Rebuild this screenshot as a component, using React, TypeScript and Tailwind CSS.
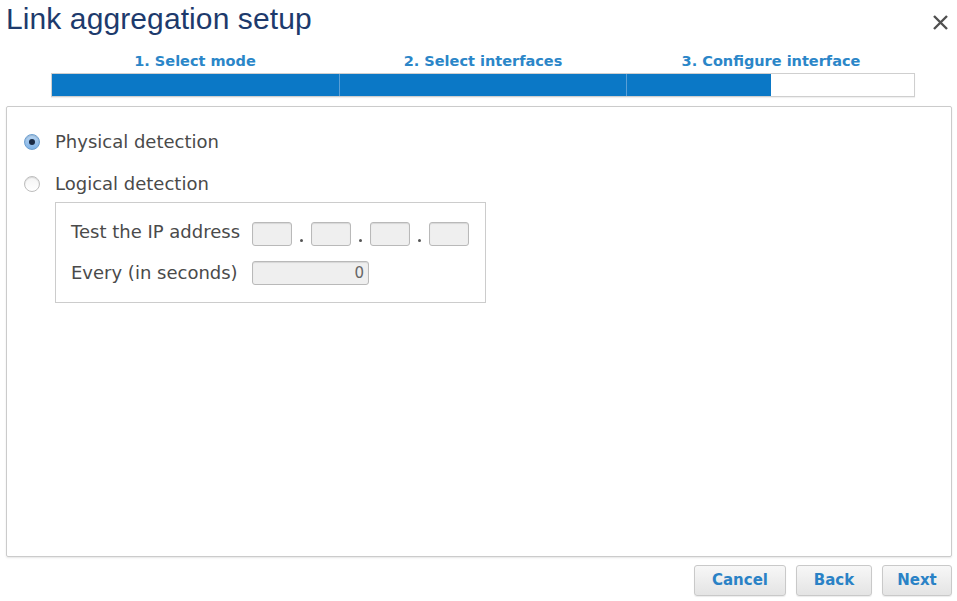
import React from "react";

const font = { fontFamily: '"Liberation Sans", Arial, Helvetica, sans-serif' };
const body = { fontFamily: '"DejaVu Sans", Verdana, sans-serif' };

function Radio({ checked }: { checked: boolean }) {
  if (checked) {
    return (
      <span className="w-[16px] h-[16px] rounded-full border border-[#6c9fd0] bg-gradient-to-b from-[#b9d6f3] to-[#7fb2e6] flex items-center justify-center shadow-[inset_0_1px_1px_rgba(0,0,0,0.15)]">
        <span className="w-[6px] h-[6px] rounded-full bg-[#1a2a44]" />
      </span>
    );
  }
  return (
    <span className="w-[16px] h-[16px] rounded-full border border-[#bdbdbd] bg-gradient-to-b from-[#f4f4f4] to-[#ffffff] shadow-[inset_0_1px_1px_rgba(0,0,0,0.12)]" />
  );
}

function Field({ w, value }: { w: string; value?: string }) {
  return (
    <div
      className={`${w} h-[24px] rounded-[3px] border border-[#b9b9b9] bg-[#efefef] shadow-[inset_0_1px_1px_rgba(0,0,0,0.1)] flex items-center justify-end pr-[4px] text-[15px] leading-none text-[#666]`}
    >
      {value}
    </div>
  );
}

function Dot() {
  return (
    <span className="w-[19px] flex justify-center items-end h-[24px] pb-[4px]">
      <span className="w-[3px] h-[3px] rounded-full bg-[#555]" />
    </span>
  );
}

function Btn({ label, w }: { label: string; w: string }) {
  return (
    <button
      style={body}
      className={`${w} h-[31px] rounded-[3px] border border-[#c9c9c9] bg-gradient-to-b from-[#f7f7f7] to-[#e4e4e4] text-[15px] font-bold text-[#2a82c6] shadow-[0_1px_1px_rgba(0,0,0,0.08)]`}
    >
      {label}
    </button>
  );
}

export default function App() {
  return (
    <div className="w-[957px] h-[601px] bg-white flex flex-col overflow-hidden" style={font}>
      {/* Header */}
      <div className="flex justify-between items-start">
        <h1 className="pl-[6px] pt-[1px] text-[30px] leading-[35px] text-[#1d3a6c] tracking-[0.1px]">
          Link aggregation setup
        </h1>
        <svg className="mt-[14px] mr-[8px]" width="17" height="17" viewBox="0 0 17 17">
          <path d="M2 2 L15 15 M15 2 L2 15" stroke="#505050" strokeWidth="2.4" strokeLinecap="butt" />
        </svg>
      </div>

      {/* Steps */}
      <div className="ml-[51px] w-[864px] mt-[17px]">
        <div className="grid grid-cols-3 text-[14.5px] leading-[17px] font-bold text-[#2b86c8]" style={body}>
          <div className="text-center">1. Select mode</div>
          <div className="text-center">2. Select interfaces</div>
          <div className="text-center">3. Configure interface</div>
        </div>
        <div className="mt-[3px] h-[24px] flex border border-[#cfcfcf] shadow-[0_1px_1px_rgba(0,0,0,0.06)]">
          <div className="flex-1 bg-[#0b78c6]" />
          <div className="flex-1 bg-[#0b78c6] border-l border-[#5a9fd6]" />
          <div className="flex-1 border-l border-[#5a9fd6] flex">
            <div className="w-[50%] bg-[#0b78c6]" />
            <div className="flex-1 bg-white" />
          </div>
        </div>
      </div>

      {/* Panel */}
      <div
        className="ml-[6px] mr-[5px] mt-[9px] h-[451px] border border-[#cbcbcb] rounded-[2px] shadow-[0_1px_2px_rgba(0,0,0,0.1)] pl-[17px] pt-[24px] text-[#4a4a4a]"
        style={body}
      >
        <div className="flex items-center h-[22px] gap-[15px]">
          <Radio checked />
          <span className="text-[18px] leading-[22px]">Physical detection</span>
        </div>
        <div className="flex items-center h-[22px] gap-[15px] mt-[20px]">
          <Radio checked={false} />
          <span className="text-[18px] leading-[22px]">Logical detection</span>
        </div>
        <div className="ml-[31px] mt-[7px] w-[431px] h-[101px] border border-[#cccccc] pl-[15px] pt-[19px] text-[18px] leading-[22px]">
          <div className="flex items-center h-[24px]">
            <span className="w-[181px] -mt-[5px] whitespace-nowrap">Test the IP address</span>
            <Field w="w-[40px]" />
            <Dot />
            <Field w="w-[40px]" />
            <Dot />
            <Field w="w-[40px]" />
            <Dot />
            <Field w="w-[40px]" />
          </div>
          <div className="flex items-center h-[24px] mt-[15px]">
            <span className="w-[181px] -mt-[1px] whitespace-nowrap">Every (in seconds)</span>
            <Field w="w-[117px]" value="0" />
          </div>
        </div>
      </div>

      {/* Buttons */}
      <div className="flex justify-end mt-[8px] mr-[5px] gap-[10px]">
        <Btn label="Cancel" w="w-[92px]" />
        <Btn label="Back" w="w-[76px]" />
        <Btn label="Next" w="w-[70px]" />
      </div>
    </div>
  );
}
